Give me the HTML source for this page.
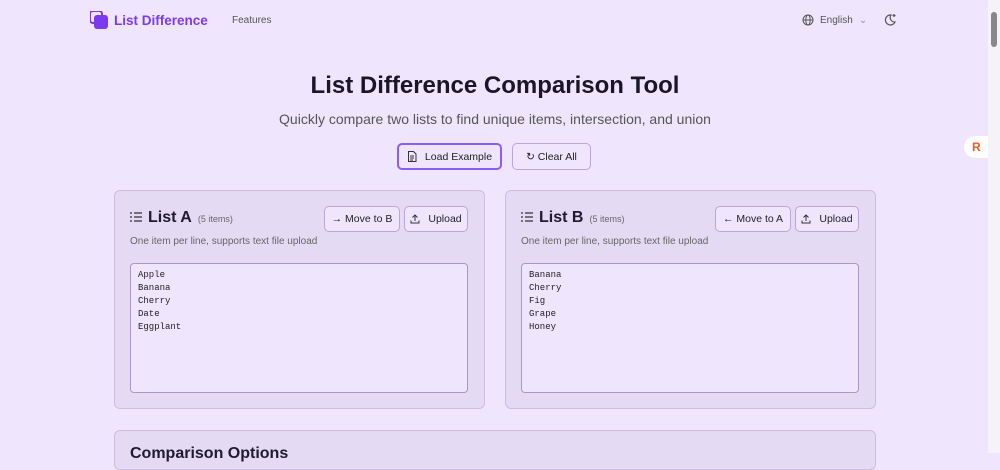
<!DOCTYPE html>
<html><head><meta charset="utf-8"><style>
*{box-sizing:border-box;margin:0;padding:0}
body{width:1000px;height:453px;overflow:hidden;background:#efe6fd;font-family:"Liberation Sans",sans-serif;color:#1f1a2e;position:relative}
.abs{position:absolute}
.logo{left:90px;top:11px;width:18px;height:18px}
.brand{left:114px;top:13px;font-size:13.5px;font-weight:bold;color:#7c3aed}
.nav{left:232px;top:15px;font-size:10px;color:#555}
.lang{left:802px;top:14px;font-size:10px;color:#555;display:flex;align-items:center;gap:6px}
h1{position:absolute;left:0;width:990px;top:72px;text-align:center;font-size:24px;font-weight:bold;color:#1a1625}
.sub{left:0;width:990px;top:111px;text-align:center;font-size:14px;color:#555}
.btn{position:absolute;height:26px;border:1px solid #b9a7d8;border-radius:5px;background:#efe6fd;font-size:10.5px;color:#222;display:flex;align-items:center;justify-content:center;gap:8px}
.card{position:absolute;background:#e4daf3;border:1px solid #cbbde3;border-radius:6px}
.ttl{position:absolute;left:15px;top:18px;font-size:16px;font-weight:bold;display:flex;align-items:baseline;gap:6px}
.ttl small{font-size:9px;font-weight:normal;color:#666}
.hint{position:absolute;left:15px;top:45px;font-size:10px;color:#666}
.ta{position:absolute;left:15px;top:72px;width:338px;height:130px;background:#efe6fd;border:1px solid #a997c6;border-radius:4px;font-family:"Liberation Mono",monospace;font-size:9px;line-height:13px;padding:5px 7px;color:#222;white-space:pre}
.scroll{right:0;top:0;width:12px;height:453px;background:#f5f3f8}
</style></head><body>
<svg class="abs logo" viewBox="0 0 18 18"><rect x="0" y="0" width="12" height="12" rx="3" fill="none" stroke="#7c3aed" stroke-width="2"/><rect x="4" y="4" width="14" height="14" rx="3" fill="#7c3aed"/></svg>
<div class="abs brand">List Difference</div>
<div class="abs nav">Features</div>
<div class="abs lang"><svg width="12" height="12" viewBox="0 0 12 12" fill="none" stroke="#555" stroke-width="1"><circle cx="6" cy="6" r="5"/><ellipse cx="6" cy="6" rx="2.2" ry="5"/><path d="M1 6h10"/></svg>English <span style="color:#999">⌄</span></div>
<svg class="abs" style="left:883px;top:13px" width="14" height="14" viewBox="0 0 14 14" fill="none" stroke="#555" stroke-width="1.2"><path d="M8 2a5 5 0 1 0 4 7 4.5 4.5 0 0 1-4-7z"/><path d="M11 1v3M9.5 2.5h3"/></svg>
<h1>List Difference Comparison Tool</h1>
<div class="abs sub">Quickly compare two lists to find unique items, intersection, and union</div>
<div class="btn" style="left:397px;top:143px;width:105px;height:27px;border:2px solid #8b5cf6"><svg width="10" height="11" viewBox="0 0 10 11" fill="none" stroke="#333" stroke-width="1"><path d="M1.5 .5h5l2.5 2.5v7.5h-7.5z M3 5h4M3 7h4M3 9h3"/></svg>Load Example</div>
<div class="btn" style="left:512px;top:143px;width:79px;height:27px">↻ Clear All</div>
<div class="card" style="left:114px;top:190px;width:371px;height:219px">
<div class="ttl"><svg width="12" height="10" viewBox="0 0 12 10" stroke="#333" stroke-width="1.2"><path d="M0 1h2M4 1h8M0 5h2M4 5h8M0 9h2M4 9h8"/></svg>List A <small>(5 items)</small></div>
<div class="btn" style="left:209px;top:15px;width:76px">→ Move to B</div>
<div class="btn" style="left:289px;top:15px;width:64px"><svg width="10" height="10" viewBox="0 0 10 10" fill="none" stroke="#333" stroke-width="1"><path d="M5 7V1M2.5 3.5L5 1l2.5 2.5M1 6.5v2.5h8V6.5"/></svg>Upload</div>
<div class="hint">One item per line, supports text file upload</div>
<div class="ta">Apple
Banana
Cherry
Date
Eggplant</div>
</div>
<div class="card" style="left:505px;top:190px;width:371px;height:219px">
<div class="ttl"><svg width="12" height="10" viewBox="0 0 12 10" stroke="#333" stroke-width="1.2"><path d="M0 1h2M4 1h8M0 5h2M4 5h8M0 9h2M4 9h8"/></svg>List B <small>(5 items)</small></div>
<div class="btn" style="left:209px;top:15px;width:76px">← Move to A</div>
<div class="btn" style="left:289px;top:15px;width:64px"><svg width="10" height="10" viewBox="0 0 10 10" fill="none" stroke="#333" stroke-width="1"><path d="M5 7V1M2.5 3.5L5 1l2.5 2.5M1 6.5v2.5h8V6.5"/></svg>Upload</div>
<div class="hint">One item per line, supports text file upload</div>
<div class="ta">Banana
Cherry
Fig
Grape
Honey</div>
</div>
<div class="card" style="left:114px;top:430px;width:762px;height:40px"><div style="position:absolute;left:15px;top:14px;font-size:16px;font-weight:bold">Comparison Options</div></div>
<div class="abs" style="left:964px;top:136px;width:26px;height:22px;background:#fff;border-radius:11px 0 0 11px;color:#f05a22;font-weight:bold;font-size:12px;padding:4px 0 0 8px">R</div>
<div class="abs scroll"><div style="position:absolute;left:3px;top:12px;width:6px;height:35px;background:#888;border-radius:3px"></div></div>
</body></html>
